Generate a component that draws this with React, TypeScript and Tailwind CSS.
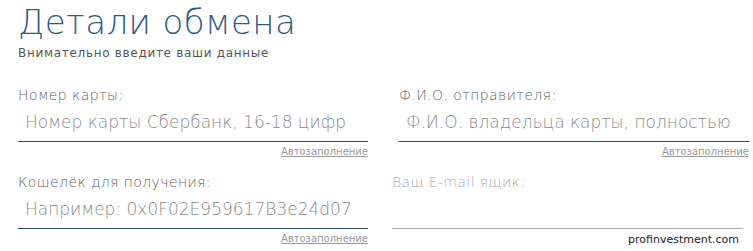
import React from "react";

type FieldProps = {
  label: string;
  placeholder?: string;
  autofill?: boolean;
  muted?: boolean;
};

function Field({ label, placeholder, autofill = true, muted = false }: FieldProps) {
  return (
    <div className={`flex flex-col ${muted ? "-ml-[7px] mr-[6px]" : ""}`}>
      <label
        className={`h-[20px] text-[14px] leading-[20px] font-light tracking-[0.4px] ${
          muted ? "text-[#a9a9a9]" : "text-[#5f5f5f]"
        }`}
      >
        {label}
      </label>
      <input
        type="text"
        placeholder={placeholder}
        className={`mt-[6px] h-[31px] w-full bg-transparent pl-[7px] pb-[8px] text-[17px] leading-[22px] font-light outline-none placeholder:text-[#8a8a8a] border-b ${
          muted ? "border-[#a5a5a5]" : "border-[#2f4b5a]"
        }`}
      />
      <div className="h-[20px] text-right text-[10px] leading-[20px]">
        {autofill && (
          <a href="#" className="text-[#9a9a9a] underline underline-offset-[1px]">
            Автозаполнение
          </a>
        )}
      </div>
    </div>
  );
}

export default function App() {
  return (
    <div
      className="w-[753px] h-[251px] bg-white overflow-hidden relative"
      style={{ fontFamily: '"DejaVu Sans", "Liberation Sans", sans-serif' }}
    >
      <div className="ml-[18px] w-[731px]">
        <h1 className="mt-[2px] text-[34px] leading-[40px] font-light tracking-[0.4px] text-[#2e5a80]">
          Детали обмена
        </h1>
        <p className="mt-[3px] text-[12px] leading-[16px] tracking-[0.7px] text-[#555]">
          Внимательно введите ваши данные
        </p>
        <div className="mt-[24px] grid grid-cols-2 gap-x-[31px] gap-y-[10px]">
          <Field label="Номер карты:" placeholder="Номер карты Сбербанк, 16-18 цифр" />
          <Field label="Ф.И.О. отправителя:" placeholder="Ф.И.О. владельца карты, полностью" />
          <Field label="Кошелёк для получения:" placeholder="Например: 0x0F02E959617B3e24d07" />
          <Field label="Ваш E-mail ящик:" autofill={false} muted />
        </div>
      </div>
      <span className="absolute right-[14px] bottom-[4px] text-[11px] leading-[14px] text-[#222]">
        profinvestment.com
      </span>
    </div>
  );
}
